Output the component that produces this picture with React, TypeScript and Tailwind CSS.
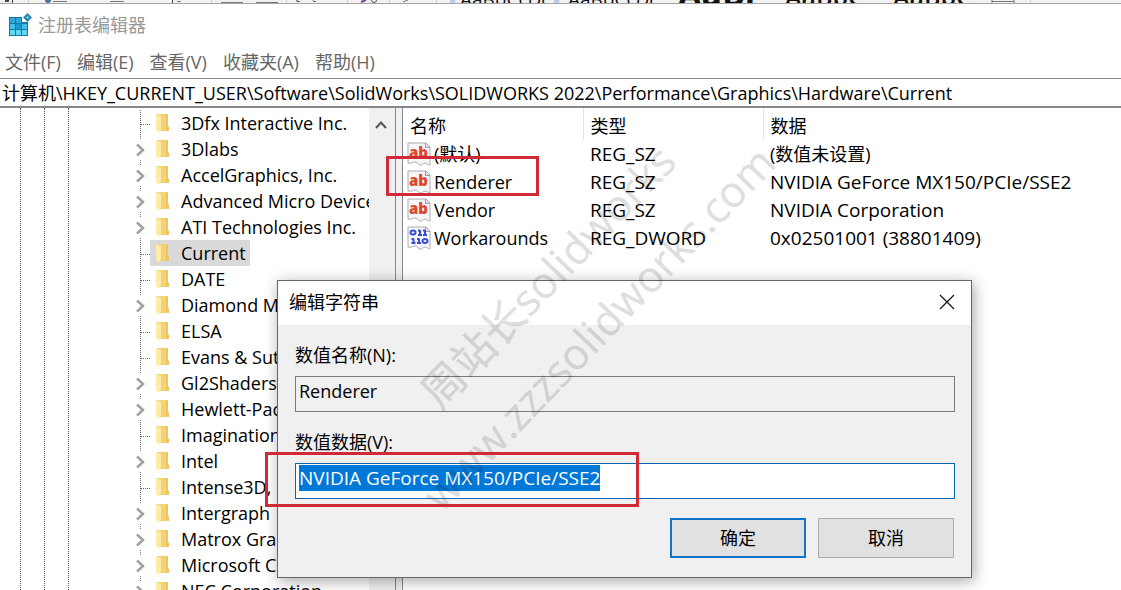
import { clsx } from "clsx";
import { useEffect, useRef } from "react";

type TreeNode = { name: string; expandable?: boolean; selected?: boolean };
type RegValue = { name: string; type: string; data: string; binary?: boolean; unset?: boolean };

const menus = ["文件(F)", "编辑(E)", "查看(V)", "收藏夹(A)", "帮助(H)"];

const nodes: TreeNode[] = [
  { name: "3Dfx Interactive Inc." },
  { name: "3Dlabs", expandable: true },
  { name: "AccelGraphics, Inc.", expandable: true },
  { name: "Advanced Micro Devices", expandable: true },
  { name: "ATI Technologies Inc.", expandable: true },
  { name: "Current", selected: true },
  { name: "DATE" },
  { name: "Diamond Multimedia", expandable: true },
  { name: "ELSA" },
  { name: "Evans & Sutherland" },
  { name: "Gl2Shaders", expandable: true },
  { name: "Hewlett-Packard", expandable: true },
  { name: "Imagination" },
  { name: "Intel", expandable: true },
  { name: "Intense3D, Inc." },
  { name: "Intergraph", expandable: true },
  { name: "Matrox Graphics", expandable: true },
  { name: "Microsoft Corporation", expandable: true },
  { name: "NEC Corporation", expandable: true },
];

const values: RegValue[] = [
  { name: "(默认)", type: "REG_SZ", data: "(数值未设置)", unset: true },
  { name: "Renderer", type: "REG_SZ", data: "NVIDIA GeForce MX150/PCIe/SSE2" },
  { name: "Vendor", type: "REG_SZ", data: "NVIDIA Corporation" },
  { name: "Workarounds", type: "REG_DWORD", data: "0x02501001 (38801409)", binary: true },
];

function RegeditIcon() {
  return (
    <svg aria-hidden className="h-6 w-6 shrink-0" viewBox="0 0 24 24">
      <path d="M1 4h13v5h6v14H1z" fill="#1479a8" />
      <path d="M2 5h5v5H2zM8 5h5v5H8z" fill="#2fa6d6" />
      <path d="M2 11h5v5H2zM14 11h5v5h-5z" fill="#3fc0ea" />
      <path d="M8 11h5v5H8z" fill="#1f98cc" />
      <path d="M2 17h5v5H2zM8 17h5v5H8zM14 17h5v5h-5z" fill="#62d4f4" />
      <path d="M19.500 0l4.500 4.500-4.500 4.500L15 4.500z" fill="#2a86b0" />
      <path d="M19.500 3l1.500 1.500-1.500 1.500L18 4.500z" fill="#7fd0ee" />
    </svg>
  );
}

function FolderIcon() {
  return (
    <svg aria-hidden className="h-5 w-4 shrink-0" viewBox="0 0 16 20">
      <path d="M2 1h10v12l2 1v4H4z" fill="#f6d173" />
      <path d="M11 1h2v12l1 1v4h-3z" fill="#edc55e" />
      <path d="M1 1l5 2v13l-2 3.500L1 17z" fill="#fdeba9" />
    </svg>
  );
}

function ValueIcon({ binary }: { binary?: boolean }) {
  return (
    <svg aria-hidden className="h-6 w-6 shrink-0" viewBox="0 0 24 24">
      <path
        d="M1 1h18l4 4v18c-2 0-3-2-5-2s-3 3-5 2-3-3-5-3-3 2-7 1z"
        fill="#f5f6f9"
        stroke="#a9acb2"
      />
      <path d="M18.500 1v4.500H23" fill="#dcdfe3" stroke="#9a9da2" />
      {binary ? (
        <g fill="none" stroke="#3a4fd0" strokeWidth="2">
          <ellipse cx="6" cy="6.500" rx="2.500" ry="2" />
          <ellipse cx="18" cy="15" rx="2.500" ry="2" />
          <path d="M13 4v5M18 4v5M6.500 12.500v5M12 12.500v5M11 4.500h2M16 4.500h2M4.500 13h2M10 13h2M11 9h4M16 9h4M4.500 17h4M10 17h4" />
        </g>
      ) : (
        <text
          x="11.500"
          y="16"
          textAnchor="middle"
          fontFamily="Open Sans, sans-serif"
          fontSize="15"
          fontWeight="800"
          fill="#dc4a2c"
        >
          ab
        </text>
      )}
    </svg>
  );
}

// Sliver of the document window that sits behind the editor
function RibbonEdge() {
  return (
    <svg aria-hidden className="block h-1 w-full shrink-0 border-b border-[#a5a5a5] bg-[#f1f1f1]">
      <path d="M5 0h4v2H5zM12 0h1v3h-1zM172 0h1v3h-1zM296 0l5 2h-4zM312 0l5 2h-3z" fill="#444" />
      <path d="M53 1h14v1H53zM110 1h14v1h-14zM177 1h4v1h-4zM221 2h22v1h-22zM256 2h22v1h-22z" fill="#777" />
      <path
        d="M28 0h1v3h-1zM211 0h1v3h-1zM286 0h1v3h-1zM347 0h1v3h-1zM389 0h1v3h-1zM436 0h1v3h-1zM1030 0h1v3h-1z"
        fill="#ccc"
      />
      <circle cx="48" cy="0" r="3" fill="#41719c" />
      <path d="M361 2l5-2" fill="none" stroke="#7048a0" strokeWidth="2" />
      <circle cx="374" cy="0" r="2.500" fill="none" stroke="#555" />
      <path d="M403 2l5-2M992 0v3M1014 0v3M992 1.500h22" stroke="#777" />
      <path d="M450 0h5v3h-5zM554 0h5v3h-5z" fill="#b9cbe8" />
      <g fontFamily="Open Sans, sans-serif" fontSize="19" fill="#111">
        <text x="460" y="6">AaBbCcDc</text>
        <text x="568" y="6">AaBbCcDc</text>
        <text x="678" y="6" fontSize="34" fontWeight="700">AaBl</text>
        <text x="785" y="6" fontSize="25" fontWeight="600">AaBbC</text>
        <text x="893" y="6" fontSize="25" fontWeight="600">AaBbC</text>
      </g>
    </svg>
  );
}

function Tree() {
  return (
    <div className="flex h-full w-[396px] shrink-0 overflow-hidden border-r border-[#828790]">
      <div className="flex shrink-0 pl-5">
        <div className="w-6 border-l border-dotted border-[#555]" />
        <div className="w-6 border-l border-dotted border-[#555]" />
        <div className="w-16 border-l border-dotted border-[#555]" />
      </div>
      <ul className="min-w-0 flex-1 overflow-hidden pt-0.5">
        {nodes.map((node) => (
          <li key={node.name} className="flex h-[26px] items-center whitespace-nowrap">
            {node.expandable ? (
              <svg aria-hidden className="h-[26px] w-[18px] shrink-0" viewBox="0 0 18 26">
                <path d="M8.500 0v4M8.500 24v2" stroke="#777" strokeDasharray="1 1" />
                <path d="M5 8.500l6 5.500-6 5.500" fill="none" stroke="#a0a0a0" strokeWidth="2.500" />
              </svg>
            ) : (
              <svg aria-hidden className="h-[26px] w-[18px] shrink-0" viewBox="0 0 18 26">
                <path d="M8.500 0v26M9 14.500h9" stroke="#666" strokeDasharray="1 1" />
              </svg>
            )}
            <span
              className={clsx(
                "flex h-[26px] items-center gap-2.5 pr-1 pl-[5px]",
                node.selected && "bg-[#d9d9d9]",
              )}
            >
              <FolderIcon />
              {node.name}
            </span>
          </li>
        ))}
      </ul>
      <div className="w-[26px] shrink-0 bg-[#f0f0f0]">
        <svg aria-hidden className="h-8 w-6" viewBox="0 0 24 32">
          <path d="M7 20l5-5.500 5 5.500" fill="none" stroke="#555" strokeWidth="2" />
        </svg>
      </div>
    </div>
  );
}

function ValueTable() {
  return (
    <div className="min-w-0 flex-1 overflow-hidden border-l border-[#828790]">
      <table className="w-full table-fixed border-collapse text-left whitespace-nowrap">
        <thead>
          <tr className="h-8">
            <th className="w-[180px] border-r border-[#e5e5e5] pt-1 pb-0 pl-[7px] font-normal">名称</th>
            <th className="w-[180px] border-r border-[#e5e5e5] pt-1 pb-0 pl-[7px] font-normal">类型</th>
            <th className="pt-1 pb-0 pl-[7px] font-normal">数据</th>
          </tr>
        </thead>
        <tbody>
          {values.map((value) => (
            <tr key={value.name} className="h-7">
              <td className="p-0 pl-1">
                <div className="flex h-7 items-center gap-[3px]">
                  <ValueIcon binary={value.binary} />
                  {value.name}
                </div>
              </td>
              <td className="p-0 pl-[7px] text-[19px]">{value.type}</td>
              <td className={clsx("p-0 pl-[7px]", !value.unset && "text-[19px]")}>{value.data}</td>
            </tr>
          ))}
        </tbody>
      </table>
    </div>
  );
}

function EditDialog() {
  const dataRef = useRef<HTMLInputElement>(null);

  useEffect(() => {
    dataRef.current?.focus();
    dataRef.current?.select();
  }, []);

  return (
    <form
      role="dialog"
      aria-labelledby="dialog-title"
      className="absolute top-[280px] left-[277px] w-[695px] border border-[#666] bg-[#f0f0f0] shadow-[2px_3px_14px_rgba(0,0,0,0.35)]"
    >
      <div className="flex h-11 items-center justify-between bg-white pr-4 pb-0.5 pl-[11px]">
        <h2 id="dialog-title">编辑字符串</h2>
        <button type="button" aria-label="关闭">
          <svg aria-hidden className="h-4 w-4" viewBox="0 0 16 16">
            <path d="M1 1l14 14M15 1L1 15" stroke="#111" strokeWidth="1.200" />
          </svg>
        </button>
      </div>
      <div className="pt-[18px] pr-4 pb-[19px] pl-[17px]">
        <label htmlFor="value-name" className="block h-[33px] leading-6">
          数值名称(N):
        </label>
        <input
          id="value-name"
          readOnly
          defaultValue="Renderer"
          className="mb-[18px] block h-9 w-full border border-[#7a7a7a] bg-[#f0f0f0] px-[3px] pb-1.5 outline-none"
        />
        <label htmlFor="value-data" className="block h-[33px] leading-6">
          数值数据(V):
        </label>
        <input
          id="value-data"
          ref={dataRef}
          defaultValue="NVIDIA GeForce MX150/PCIe/SSE2"
          className="mb-[19px] block h-9 w-full border border-[#0067b0] bg-white px-[3px] pb-1.5 text-[19px] outline-none selection:bg-[#0078d7] selection:text-white"
        />
        <div className="flex justify-end gap-3 pr-px">
          <button type="button" className="h-10 w-[136px] border-2 border-[#0f73c8] bg-[#e1e1e1]">
            确定
          </button>
          <button type="button" className="h-10 w-[136px] border border-[#adadad] bg-[#e1e1e1]">
            取消
          </button>
        </div>
      </div>
    </form>
  );
}

function Watermark() {
  return (
    <svg aria-hidden className="pointer-events-none absolute inset-0 h-full w-full">
      <g
        fill="#000"
        fillOpacity="0.13"
        stroke="#000"
        strokeOpacity="0.06"
        fontFamily="Open Sans, Noto Sans CJK SC, sans-serif"
        fontSize="43"
      >
        <text transform="translate(440 411) rotate(-46)">周站长solidworks</text>
        <text transform="translate(442 513) rotate(-46)">www.zzzsolidworks.com</text>
      </g>
    </svg>
  );
}

export default function App() {
  return (
    <div className="relative flex h-screen flex-col overflow-hidden bg-white font-['Open_Sans','Noto_Sans_CJK_SC',sans-serif] text-[18px] leading-[26px] text-black">
      <RibbonEdge />
      <header className="flex h-[42px] shrink-0 items-center gap-1.5 pl-2 text-[#999]">
        <RegeditIcon />
        <h1>注册表编辑器</h1>
      </header>
      <nav className="flex h-8 shrink-0 items-center gap-4 pl-[5px] text-[#666]">
        {menus.map((menu) => (
          <button key={menu} type="button">
            {menu}
          </button>
        ))}
      </nav>
      <input
        aria-label="地址"
        readOnly
        defaultValue="计算机\HKEY_CURRENT_USER\Software\SolidWorks\SOLIDWORKS 2022\Performance\Graphics\Hardware\Current"
        className="h-[30px] w-full shrink-0 border-t border-b-2 border-[#828790] px-0.5 pb-0.5 outline-none"
      />
      <main className="flex min-h-0 flex-1 gap-1.5 bg-[#f0f0f0] *:bg-white">
        <Tree />
        <ValueTable />
      </main>
      <EditDialog />
      <Watermark />
      <div className="absolute top-[156px] left-[386px] h-10 w-[153px] border-3 border-[#cf2a36]" />
      <div className="absolute top-[452px] left-[265px] h-[55px] w-[374px] border-3 border-[#cf2a36]" />
    </div>
  );
}
